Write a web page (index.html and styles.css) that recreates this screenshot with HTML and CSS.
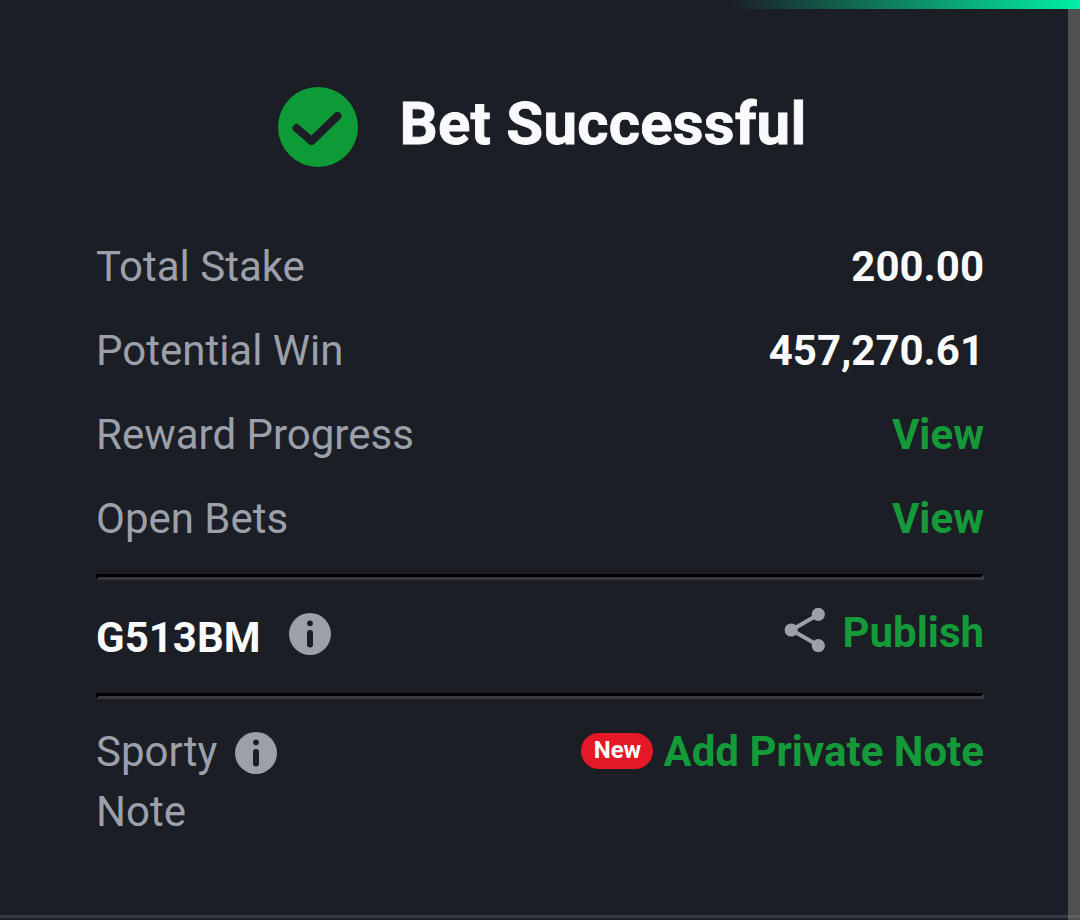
FILE: index.html
```html
<!DOCTYPE html>
<html lang="en">

<head>
    <meta charset="UTF-8" />
    <meta name="viewport" content="width=device-width, initial-scale=1.0" />
    <title>Bet Successful</title>
    <link rel="stylesheet" href="styles.css">
</head>

<body>
    <main class="dialog">
        <header class="header">
            <svg class="check" viewBox="0 0 80 80">
                <circle cx="40" cy="40" r="40" />
                <path d="M18.5 41 L33.5 54 L59.5 29" />
            </svg>
            <h1 class="title">Bet Successful</h1>
        </header>

        <div class="rows">
            <div class="row">
                <span class="label">Total Stake</span>
                <span class="value">200.00</span>
            </div>
            <div class="row">
                <span class="label">Potential Win</span>
                <span class="value">457,270.61</span>
            </div>
            <div class="row">
                <span class="label">Reward Progress</span>
                <a class="link">View</a>
            </div>
            <div class="row">
                <span class="label">Open Bets</span>
                <a class="link">View</a>
            </div>
        </div>

        <hr class="divider">

        <div class="row code-row">
            <div class="code">
                <span class="value">G513BM</span>
                <svg class="info" viewBox="0 0 42 42">
                    <circle class="disc" cx="21" cy="21" r="21" />
                    <circle cx="21" cy="10.3" r="2.9" />
                    <path d="M21 20 V31.5" />
                </svg>
            </div>
            <div class="publish">
                <svg class="share" viewBox="0 0 42 46">
                    <path d="M34.5 7.5 L7.5 23 L34.5 38.5" />
                    <circle cx="7.2" cy="23" r="6.6" />
                    <circle cx="34.3" cy="7.3" r="6.6" />
                    <circle cx="34.3" cy="38.7" r="6.6" />
                </svg>
                <a class="link">Publish</a>
            </div>
        </div>

        <hr class="divider">

        <div class="row note-row">
            <div class="note">
                <span class="label">Sporty<br>Note</span>
                <svg class="info" viewBox="0 0 42 42">
                    <circle class="disc" cx="21" cy="21" r="21" />
                    <circle cx="21" cy="10.3" r="2.9" />
                    <path d="M21 20 V31.5" />
                </svg>
            </div>
            <div class="add-note">
                <span class="badge">New</span>
                <a class="link">Add Private Note</a>
            </div>
        </div>
    </main>

    <div class="scrollbar"></div>
    <div class="progress"></div>
</body>

</html>
```
FILE: styles.css
```css
:root {
    --bg: #1b1e25;
    --text: #f8fafb;
    --muted: #9ca0ab;
    --green: #159a3a;
    --red: #e41827;
}

* {
    box-sizing: border-box;
}

body {
    margin: 0;
    height: 920px;
    overflow: hidden;
    position: relative;
    background-color: var(--bg);
    font-family: Roboto, sans-serif;
    font-size: 42px;
    line-height: 60px;
    color: var(--text);
}

.scrollbar {
    position: absolute;
    top: 0;
    right: 0;
    width: 12px;
    height: 100%;
    background-color: rgba(130, 129, 127, 0.5);
}

.progress {
    position: absolute;
    top: 0;
    right: 0;
    width: 350px;
    height: 9px;
    background: linear-gradient(to right, var(--bg), #00f0a5);
}

.dialog {
    height: 918px;
    padding: 87px 96px 0;
    border-bottom: 3px solid #383a41;
}

.header {
    display: flex;
    justify-content: center;
    gap: 41px;
    height: 150px;
    padding-left: 5px;
}

.check {
    width: 80px;
    height: 80px;
    fill: #0d9b37;
}

.check path {
    fill: none;
    stroke: var(--bg);
    stroke-width: 8;
    stroke-linecap: round;
    stroke-linejoin: round;
}

.title {
    margin: 0;
    padding-top: 1px;
    font-size: 60px;
    line-height: 72px;
    font-weight: 700;
    letter-spacing: 0.22px;
    -webkit-text-stroke: 0.8px var(--text);
}

.rows {
    display: flex;
    flex-direction: column;
    gap: 24px;
}

.row {
    display: flex;
    justify-content: space-between;
    align-items: flex-start;
}

.label {
    color: var(--muted);
}

.value {
    font-weight: 700;
}

.link {
    color: var(--green);
    font-weight: 700;
}

.divider {
    margin: 25px 0 0;
    border: 3px solid;
    border-color: #000 #38393e #38393e #000;
}

.code-row {
    height: 88px;
    padding-top: 23px;
}

.code {
    display: flex;
    gap: 28px;
    padding-top: 5px;
}

.info {
    width: 42px;
    height: 42px;
    fill: var(--bg);
}

.info .disc {
    fill: var(--muted);
}

.info path {
    stroke: var(--bg);
    stroke-width: 6;
    stroke-linecap: round;
}

.code .info {
    margin-top: 5px;
}

.publish {
    display: flex;
    gap: 16px;
}

.share {
    width: 42px;
    height: 46px;
    margin-top: 4px;
    fill: var(--muted);
}

.share path {
    fill: none;
    stroke: var(--muted);
    stroke-width: 4;
}

.note-row {
    padding-top: 23px;
}

.note {
    display: flex;
    gap: 18px;
}

.note .info {
    margin-top: 10px;
}

.add-note {
    display: flex;
    gap: 10px;
}

.badge {
    width: 72px;
    height: 36px;
    margin-top: 11px;
    border-radius: 18px;
    background-color: var(--red);
    color: #fff;
    font-size: 24px;
    line-height: 34px;
    font-weight: 700;
    text-align: center;
}
```
